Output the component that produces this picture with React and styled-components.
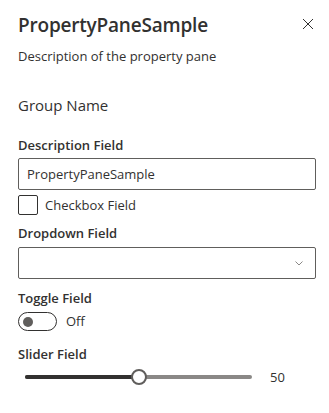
import React, { useState } from "react";
import styled, { createGlobalStyle } from "styled-components";

const Global = createGlobalStyle`
  html, body { margin: 0; padding: 0; background: #fff; }
  body { font-family: "Open Sans", "Noto Sans", sans-serif; color: #323130; }
`;

const Pane = styled.div`
  width: 329px;
  height: 413px;
  box-sizing: border-box;
  padding: 0 13px 0 18px;
  display: flex;
  flex-direction: column;
`;

const Header = styled.div`
  display: flex;
  justify-content: space-between;
  align-items: center;
  height: 44px;
  padding-top: 3px;
`;

const Title = styled.h1`
  margin: 0;
  font-size: 19px;
  font-weight: 600;
  letter-spacing: -0.2px;
  color: #323130;
`;

const CloseButton = styled.button`
  width: 32px;
  height: 32px;
  border: 0;
  background: transparent;
  display: flex;
  align-items: center;
  justify-content: center;
  padding: 0;
  margin-right: -8px;
  margin-top: -2px;
  color: #323130;
`;

const Description = styled.p`
  margin: 0;
  font-size: 13px;
  line-height: 18px;
  height: 18px;
`;

const GroupName = styled.div`
  margin-top: 29px;
  font-size: 15px;
  line-height: 22px;
`;

const Label = styled.label`
  display: block;
  font-size: 13px;
  font-weight: 600;
  line-height: 20px;
  margin-top: ${(p) => p.$top || 0}px;
  padding: 5px 0 ${(p) => p.$bottom ?? 4}px;
`;

const TextInput = styled.input`
  box-sizing: border-box;
  width: 100%;
  height: 32px;
  border: 1px solid #605e5c;
  border-radius: 2px;
  padding: 0 8px;
  font-family: inherit;
  font-size: 13px;
  color: #323130;
  outline: none;
`;

const CheckRow = styled.div`
  display: flex;
  align-items: center;
  gap: 7px;
  margin-top: 5px;
  font-size: 13px;
  line-height: 20px;
`;

const Box = styled.span`
  width: 18px;
  height: 18px;
  border: 1px solid #323130;
  border-radius: 2px;
`;

const Dropdown = styled.div`
  box-sizing: border-box;
  height: 32px;
  border: 1px solid #605e5c;
  border-radius: 2px;
  display: flex;
  align-items: center;
  justify-content: flex-end;
  padding-right: 12px;
`;

const ToggleRow = styled.div`
  display: flex;
  align-items: center;
  gap: 9px;
  font-size: 13px;
  line-height: 19px;
`;

const Track = styled.span`
  box-sizing: border-box;
  width: 39px;
  height: 19px;
  border: 1px solid #323130;
  border-radius: 10px;
  display: flex;
  align-items: center;
  padding-left: 4px;
`;

const Knob = styled.span`
  width: 10px;
  height: 10px;
  border-radius: 50%;
  background: #605e5c;
`;

const SliderRow = styled.div`
  display: flex;
  align-items: center;
  height: 24px;
  padding-left: 7px;
`;

const SliderLine = styled.div`
  position: relative;
  width: 227px;
  height: 4px;
  border-radius: 2px;
  background: #8a8886;
`;

const SliderFill = styled.div`
  height: 100%;
  border-radius: 2px;
  background: #323130;
`;

const Thumb = styled.span`
  position: absolute;
  top: 50%;
  width: 16px;
  height: 16px;
  box-sizing: border-box;
  border: 2px solid #605e5c;
  border-radius: 50%;
  background: #fff;
  transform: translate(-50%, -50%);
`;

const SliderValue = styled.span`
  margin-left: 18px;
  font-size: 13px;
`;

export default function App() {
  const [value] = useState(50);
  const pct = value + "%";
  return (
    <Pane>
      <Global />
      <Header>
        <Title>PropertyPaneSample</Title>
        <CloseButton aria-label="Close">
          <svg width="12" height="12" viewBox="0 0 12 12">
            <path d="M1 1 L11 11 M11 1 L1 11" stroke="#323130" strokeWidth="1" />
          </svg>
        </CloseButton>
      </Header>
      <Description>Description of the property pane</Description>
      <GroupName>Group Name</GroupName>

      <Label $top={14} $bottom={3}>Description Field</Label>
      <TextInput defaultValue="PropertyPaneSample" />
      <CheckRow>
        <Box />
        <span>Checkbox Field</span>
      </CheckRow>

      <Label $top={3}>Dropdown Field</Label>
      <Dropdown>
        <svg width="8" height="5" viewBox="0 0 8 5">
          <path d="M0.5 0.5 L4 4 L7.5 0.5" fill="none" stroke="#8a8886" strokeWidth="1" />
        </svg>
      </Dropdown>

      <Label $top={4}>Toggle Field</Label>
      <ToggleRow>
        <Track>
          <Knob />
        </Track>
        <span>Off</span>
      </ToggleRow>

      <Label $top={8} $bottom={1}>Slider Field</Label>
      <SliderRow>
        <SliderLine>
          <SliderFill style={{ width: pct }} />
          <Thumb style={{ left: pct }} />
        </SliderLine>
        <SliderValue>{value}</SliderValue>
      </SliderRow>
    </Pane>
  );
}
